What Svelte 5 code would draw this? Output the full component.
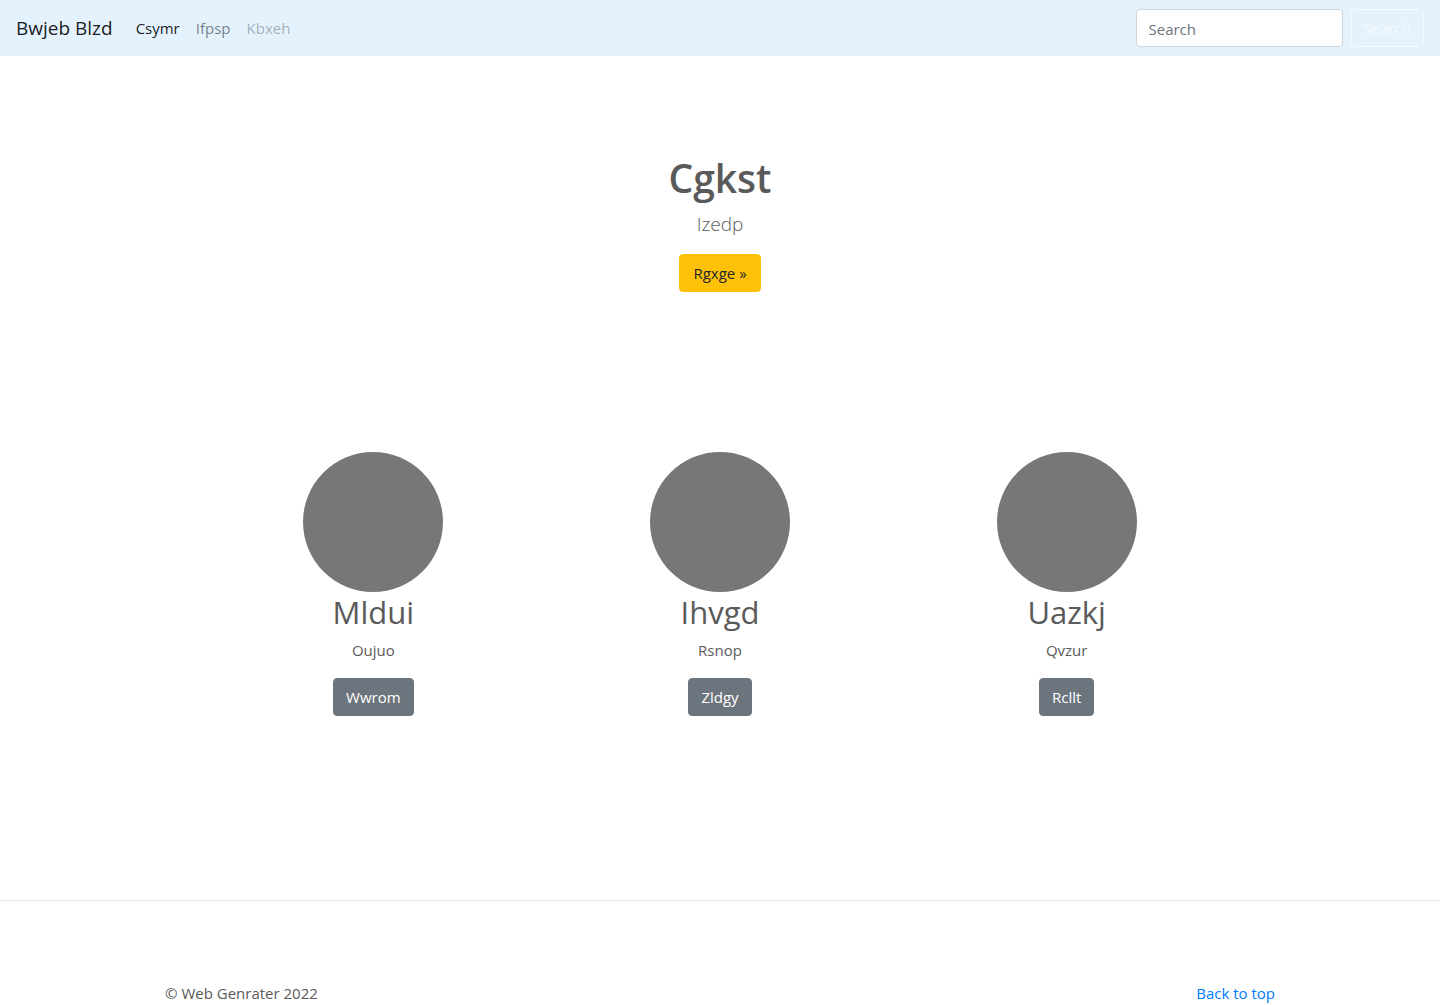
<script>
  const links = [
    { label: 'Csymr', state: 'active' },
    { label: 'Ifpsp', state: '' },
    { label: 'Kbxeh', state: 'disabled' }
  ];
  const features = [
    { title: 'Mldui', text: 'Oujuo', action: 'Wwrom' },
    { title: 'Ihvgd', text: 'Rsnop', action: 'Zldgy' },
    { title: 'Uazkj', text: 'Qvzur', action: 'Rcllt' }
  ];
  let query = $state('');
</script>

<header class="navbar" id="top">
  <a class="brand" href="#top">Bwjeb Blzd</a>
  <nav class="links" aria-label="Main">
    {#each links as link}
      <a class="link {link.state}" href="#top" aria-disabled={link.state === 'disabled'}>{link.label}</a>
    {/each}
  </nav>
  <form class="search" onsubmit={(e) => e.preventDefault()}>
    <input class="field" type="search" placeholder="Search" aria-label="Search" bind:value={query} />
    <button class="btn outline" type="submit">Search</button>
  </form>
</header>

<main>
  <section class="hero">
    <h1>Cgkst</h1>
    <p class="lead">Izedp</p>
    <a class="btn warning" href="#features">Rgxge »</a>
  </section>

  <section class="features" id="features">
    {#each features as feature}
      <article class="feature">
        <svg class="disc" viewBox="0 0 140 140" aria-hidden="true">
          <circle cx="70" cy="70" r="70" fill="#777" />
        </svg>
        <h2>{feature.title}</h2>
        <p>{feature.text}</p>
        <a class="btn secondary" href="#features">{feature.action}</a>
      </article>
    {/each}
  </section>
</main>

<hr />

<footer class="footer">
  <p>© Web Genrater 2022</p>
  <a href="#top">Back to top</a>
</footer>

<style>
  :global(body) {
    margin: 0;
    background: #fff;
    color: #5a5a5a;
    font-family: "Segoe UI", "Open Sans", "Noto Sans", sans-serif;
    font-size: 15px;
    line-height: 24px;
  }
  * {
    box-sizing: border-box;
  }
  h1, h2, p {
    margin: 0;
  }
  a {
    text-decoration: none;
  }
  .navbar {
    display: flex;
    align-items: center;
    min-height: 56px;
    padding: 8px 16px;
    background: #e3f2fd;
  }
  .brand {
    margin-right: 15px;
    color: rgba(0, 0, 0, 0.9);
    font-size: 19px;
    line-height: 30px;
  }
  .links {
    display: flex;
    flex: 1;
  }
  .link {
    padding: 8px;
    color: rgba(0, 0, 0, 0.5);
  }
  .link.active {
    color: rgba(0, 0, 0, 0.9);
  }
  .link.disabled {
    color: rgba(0, 0, 0, 0.3);
  }
  .search {
    display: flex;
    gap: 8px;
  }
  .field {
    width: 207px;
    height: 38px;
    padding: 7px 12px 5px;
    border: 1px solid #ced4da;
    border-radius: 4px;
    background: #fff;
    color: #495057;
    font: inherit;
    appearance: none;
  }
  .field::placeholder {
    color: #6c757d;
    opacity: 1;
  }
  .btn {
    display: inline-block;
    padding: 6px 12px;
    border: 1px solid transparent;
    border-radius: 4px;
    font: inherit;
    text-align: center;
    cursor: pointer;
  }
  .outline {
    border-color: #f8f9fa;
    background: transparent;
    color: #f8f9fa;
  }
  .warning {
    padding: 6px 13px;
    border-color: #ffc107;
    background: #ffc107;
    color: #212529;
  }
  .secondary {
    border-color: #6c757d;
    background: #6c757d;
    color: #fff;
  }
  .hero {
    display: flex;
    flex-direction: column;
    align-items: center;
    padding: 98px 16px 160px;
  }
  h1 {
    margin-bottom: 7px;
    font-size: 39px;
    font-weight: 600;
    line-height: 48px;
  }
  .lead {
    margin-bottom: 15px;
    font-size: 19px;
    font-weight: 300;
    line-height: 30px;
  }
  .features {
    display: grid;
    grid-template-columns: repeat(3, 1fr);
    max-width: 1040px;
    margin: 0 auto;
    padding-bottom: 184px;
  }
  .feature {
    display: flex;
    flex-direction: column;
    align-items: center;
  }
  .disc {
    width: 140px;
    height: 140px;
  }
  h2 {
    margin-bottom: 6px;
    font-size: 31px;
    font-weight: 400;
    line-height: 40px;
  }
  .feature p {
    margin-bottom: 16px;
  }
  hr {
    margin: 0 0 80px;
    border: 0;
    border-top: 1px solid rgba(0, 0, 0, 0.1);
  }
  .footer {
    display: flex;
    justify-content: space-between;
    max-width: 1140px;
    margin: 0 auto;
    padding: 0 15px;
  }
  .footer a {
    color: #007bff;
  }
</style>
